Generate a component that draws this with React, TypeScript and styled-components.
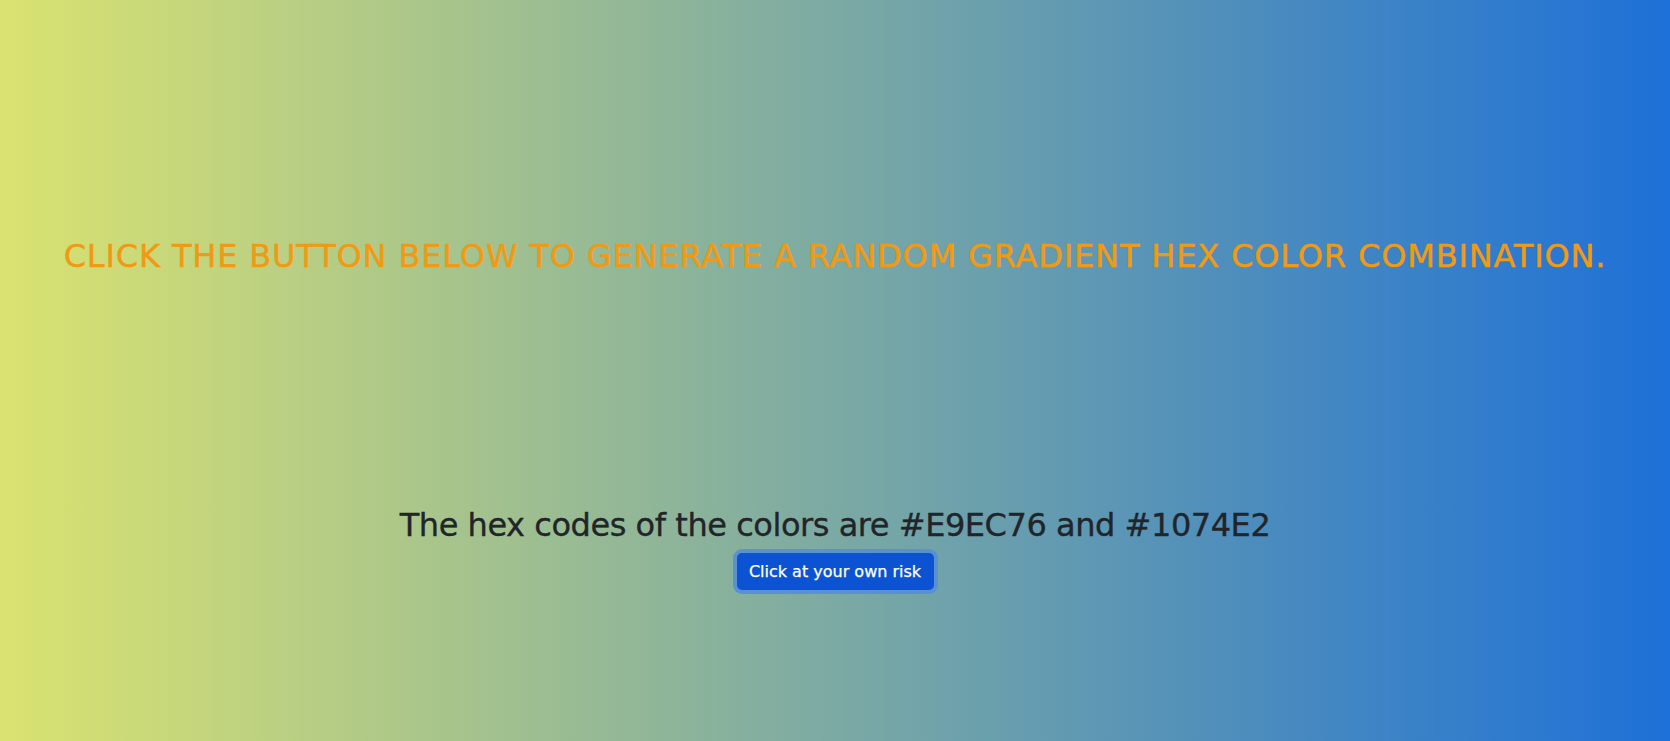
import React from "react";
import styled, { createGlobalStyle } from "styled-components";

const GlobalStyle = createGlobalStyle`
  html, body {
    margin: 0;
    padding: 0;
  }
  body {
    font-family: "DejaVu Sans", "Liberation Sans", sans-serif;
    color: #212529;
  }
`;

const Page = styled.div`
  width: 100%;
  height: 741px;
  background: linear-gradient(to right, #dae370, #1d70d7);
  display: flex;
  flex-direction: column;
  align-items: center;
  overflow: hidden;
`;

const Heading = styled.h2`
  margin: 237px 0 0;
  font-size: 32px;
  font-weight: 500;
  line-height: 1.2;
  letter-spacing: 0.85px;
  color: #f09a14;
  text-transform: uppercase;
  text-align: center;
  white-space: nowrap;
  -webkit-text-stroke: 0.45px #f09a14;
`;

const Result = styled.h2`
  margin: 231px 0 0;
  font-size: 32px;
  font-weight: 400;
  line-height: 1.2;
  letter-spacing: -0.45px;
  color: #212529;
  text-align: center;
  white-space: nowrap;
  -webkit-text-stroke: 0.35px #212529;
`;

const Button = styled.button`
  margin-top: 8px;
  width: 197px;
  height: 37px;
  border: none;
  border-radius: 5px;
  background: #0b53d3;
  color: #ffffff;
  font-family: inherit;
  font-size: 16px;
  font-weight: 500;
  box-shadow: 0 0 0 4px rgba(86, 142, 214, 0.9);
  -webkit-text-stroke: 0.25px #ffffff;
  cursor: pointer;
`;

export default function App() {
  return (
    <>
      <GlobalStyle />
      <Page>
        <Heading>Click the button below to generate a random gradient hex color combination.</Heading>
        <Result>The hex codes of the colors are #E9EC76 and #1074E2</Result>
        <Button>Click at your own risk</Button>
      </Page>
    </>
  );
}
